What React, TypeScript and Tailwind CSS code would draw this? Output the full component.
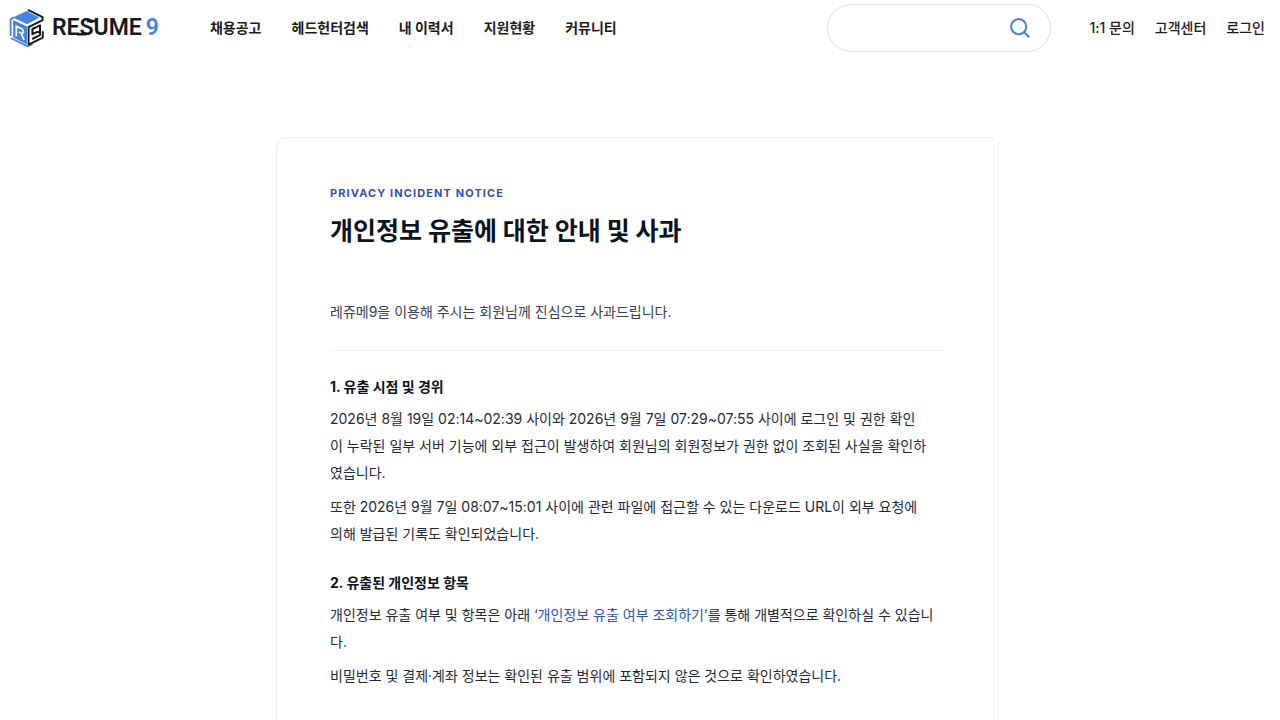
import type { ReactNode } from 'react'

const NAV_ITEMS = ['채용공고', '헤드헌터검색', '내 이력서', '지원현황', '커뮤니티']
const UTIL_ITEMS = ['1:1 문의', '고객센터', '로그인']

function LogoMark() {
  return (
    <svg viewBox="0 0 36 40" className="h-10 w-9 shrink-0" fill="none" aria-hidden="true">
      {/* top face */}
      <path d="M4 9.5 17.5 3 30.5 9.6 18 16.2Z" fill="#4284e0" />
      {/* left face */}
      <path d="M4.2 12 18 18.6V36.5L4.2 29.5Z" fill="#4284e0" />
      <path d="M1.6 27V11.5L4.5 9.6" stroke="#4284e0" strokeWidth="1.8" strokeLinecap="round" />
      <path d="M2.5 30.5 18.5 38.3 23 36.2" stroke="#4284e0" strokeWidth="1.8" strokeLinecap="round" />
      <path d="M7.3 28.5V18.2L12.6 20.8Q14.6 22 14.4 24 14 25.8 12 25L10 24M12 25 15 32" stroke="#fff" strokeWidth="1.7" />
      {/* right face */}
      <path d="M19.5 2.2 33.6 9.2V12.2L19.6 19.2V36.6L33.8 29.6V24" stroke="#16191f" strokeWidth="1.9" strokeLinecap="round" strokeLinejoin="round" />
      <path d="M31 22.6 23.4 26.2V21L31 17.4V27.2L23.2 31" stroke="#16191f" strokeWidth="2" strokeLinejoin="round" />
    </svg>
  )
}

function SearchIcon() {
  return (
    <svg viewBox="0 0 20 20" className="size-5" fill="none" stroke="#4484cf" strokeWidth="2" aria-hidden="true">
      <circle cx="8.7" cy="8.7" r="7.6" />
      <path d="M14 14 19.2 19.2" />
    </svg>
  )
}

function Header() {
  return (
    <header className="flex h-[55px] items-center pr-[15px] pl-[9px]">
      <a href="#" className="flex items-center" aria-label="RESUME9">
        <LogoMark />
        <span className="relative ml-[7px] font-['Roboto',sans-serif] text-[23px] leading-8 font-semibold text-[#16191f]">
          RESUME
          {/* swash that ties E, S and U together */}
          <svg viewBox="0 0 92 32" className="absolute top-0 left-0 h-8 w-[92px]" fill="none" stroke="#16191f" strokeWidth="2.6" aria-hidden="true">
            <path d="M25 22.2H34M35 9H44" />
          </svg>
          <span className="ml-1 text-[#4284e0]">9</span>
        </span>
      </a>

      <nav className="ml-[51px] flex gap-[30px]">
        {NAV_ITEMS.map(item => (
          <a key={item} href="#" className="text-sm font-bold whitespace-nowrap text-[#1c1c1c]">
            {item}
          </a>
        ))}
      </nav>

      <form role="search" className="ml-auto flex h-12 w-[224px] items-center rounded-full border border-[#dfe1e5] px-5">
        <input type="text" aria-label="검색" className="min-w-0 flex-1 bg-transparent text-sm outline-none" />
        <button type="button" aria-label="검색하기">
          <SearchIcon />
        </button>
      </form>

      <div className="ml-[38px] flex gap-5">
        {UTIL_ITEMS.map(item => (
          <a key={item} href="#" className="text-sm font-medium whitespace-nowrap text-[#1c1c1c]">
            {item}
          </a>
        ))}
      </div>
    </header>
  )
}

function Section({ title, children }: { title: string; children: ReactNode }) {
  return (
    <section className="mt-6">
      <h2 className="text-sm leading-6 font-bold text-[#0b1220]">{title}</h2>
      <div className="mt-[6px] flex flex-col gap-[7px] text-sm leading-[27px] text-[#1f2937]">
        {children}
      </div>
    </section>
  )
}

export default function App() {
  return (
    <div className="min-h-screen bg-white font-['Inter','Noto_Sans_CJK_KR',sans-serif]" lang="ko">
      <Header />

      <main className="pt-[82px] pr-[5px]">
        <article className="mx-auto max-w-[723px] rounded-[10px] border border-[#eceef1] px-[53px] pt-[45px] pb-20">
          <p className="text-[11px] leading-5 font-bold tracking-widest text-[#3451b2]">PRIVACY INCIDENT NOTICE</p>
          <h1 className="mt-[10px] text-[25px] leading-9 font-bold text-[#0b1220]">개인정보 유출에 대한 안내 및 사과</h1>

          <p className="mt-[49px] border-b border-[#eff1f3] pb-[25px] text-sm leading-[27px] text-[#374151]">
            레쥬메9을 이용해 주시는 회원님께 진심으로 사과드립니다.
          </p>

          <Section title="1. 유출 시점 및 경위">
            <p>
              2026년 8월 19일 02:14~02:39 사이와 2026년 9월 7일 07:29~07:55 사이에 로그인 및 권한 확인
              <br />
              이 누락된 일부 서버 기능에 외부 접근이 발생하여 회원님의 회원정보가 권한 없이 조회된 사실을 확인하
              <br />
              였습니다.
            </p>
            <p>
              또한 2026년 9월 7일 08:07~15:01 사이에 관련 파일에 접근할 수 있는 다운로드 URL이 외부 요청에
              <br />
              의해 발급된 기록도 확인되었습니다.
            </p>
          </Section>

          <Section title="2. 유출된 개인정보 항목">
            <p>
              개인정보 유출 여부 및 항목은 아래{' '}
              <a href="#" className="text-[#3451b2]">‘개인정보 유출 여부 조회하기’</a>를 통해 개별적으로 확인하실 수
              있습니
              <br />
              다.
            </p>
            <p>비밀번호 및 결제·계좌 정보는 확인된 유출 범위에 포함되지 않은 것으로 확인하였습니다.</p>
          </Section>
        </article>
      </main>
    </div>
  )
}
